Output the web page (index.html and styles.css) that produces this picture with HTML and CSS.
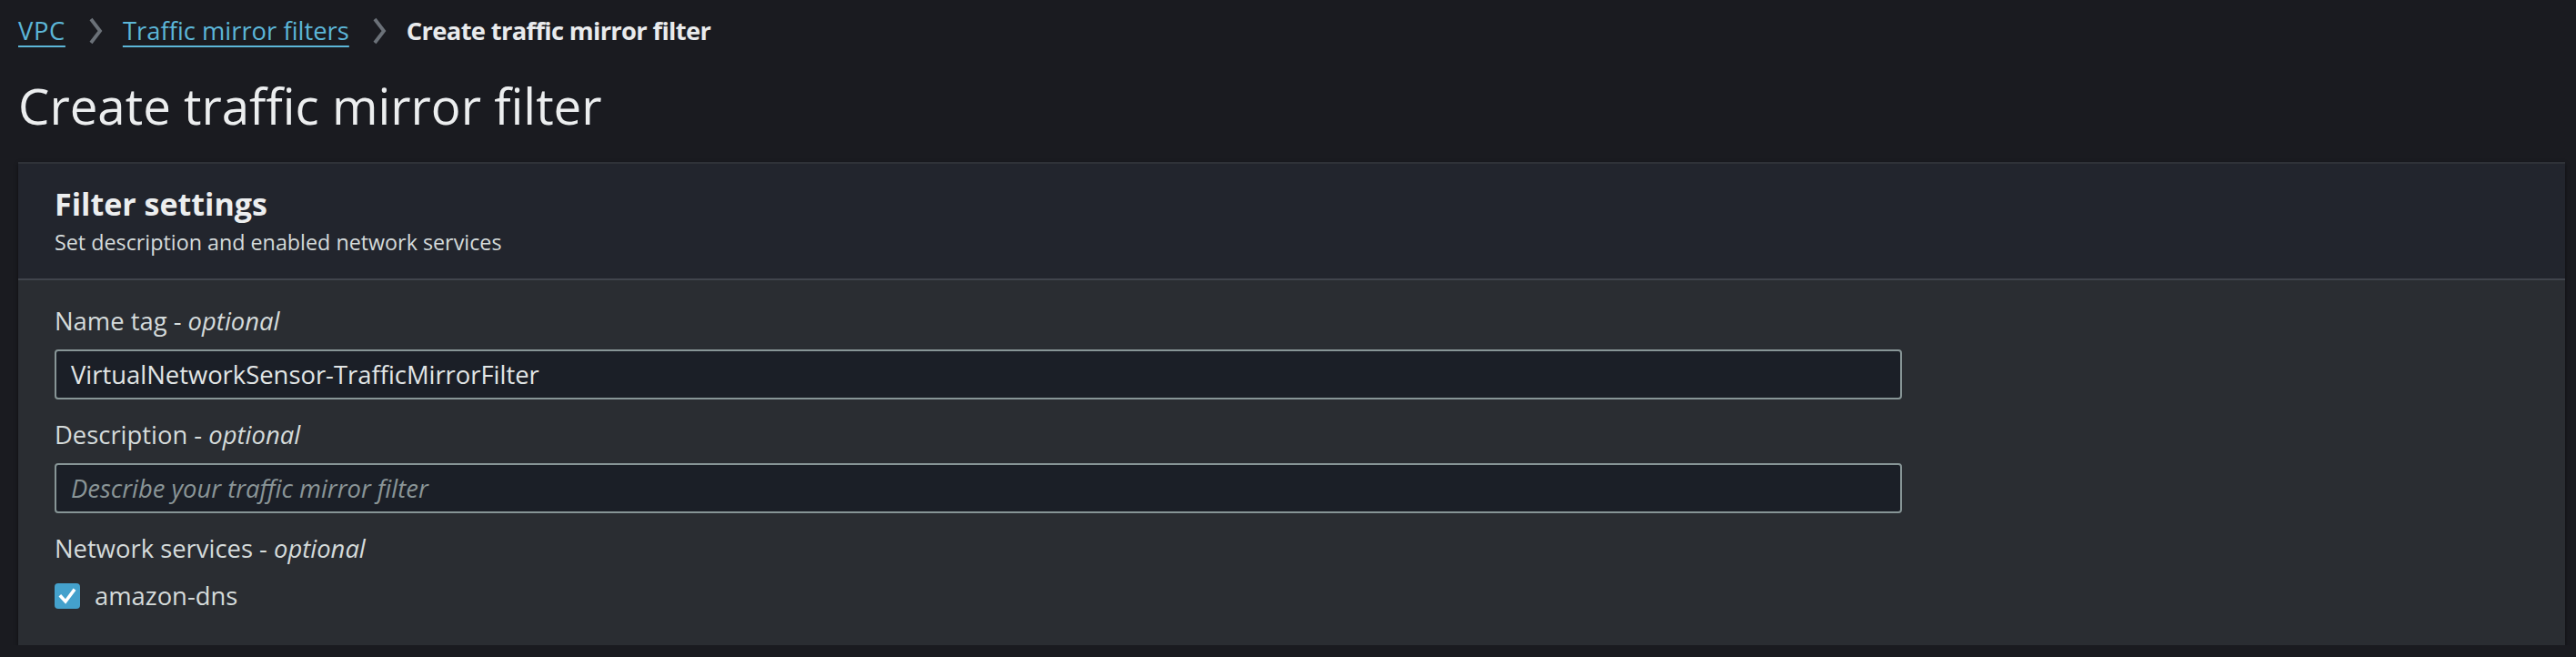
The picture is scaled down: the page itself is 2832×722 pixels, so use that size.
FILE: index.html
```html
<!DOCTYPE html>
<html lang="en">
<head>
<meta charset="utf-8">
<title>Create traffic mirror filter</title>
<link rel="stylesheet" href="styles.css">
</head>
<body>
<nav class="breadcrumbs">
  <a class="crumb-link" href="#">VPC</a>
  <svg class="chevron" viewBox="0 0 16 30" aria-hidden="true"><polyline points="3,2 13,15 3,28"/></svg>
  <a class="crumb-link" href="#">Traffic mirror filters</a>
  <svg class="chevron" viewBox="0 0 16 30" aria-hidden="true"><polyline points="3,2 13,15 3,28"/></svg>
  <span class="crumb-current">Create traffic mirror filter</span>
</nav>
<h1 class="page-title">Create traffic mirror filter</h1>
<section class="panel">
  <header class="panel-header">
    <h2 class="panel-title">Filter settings</h2>
    <p class="panel-desc">Set description and enabled network services</p>
  </header>
  <div class="panel-body">
    <div class="field">
      <label class="field-label">Name tag - <i>optional</i></label>
      <div class="input">VirtualNetworkSensor-TrafficMirrorFilter</div>
    </div>
    <div class="field">
      <label class="field-label">Description - <i>optional</i></label>
      <div class="input placeholder">Describe your traffic mirror filter</div>
    </div>
    <div class="field">
      <label class="field-label">Network services - <i>optional</i></label>
      <div class="check-row">
        <span class="checkbox">
          <svg viewBox="0 0 28 28" aria-hidden="true"><polyline points="7,14.5 12,20 21,8"/></svg>
        </span>
        <span class="check-label">amazon-dns</span>
      </div>
    </div>
  </div>
</section>
</body>
</html>
```
FILE: styles.css
```css
html, body {
  margin: 0;
  padding: 0;
  background: #1a1b20;
}
body {
  font-family: "Open Sans", "Noto Sans", sans-serif;
  font-size: 27.4px;
  color: #d5dbdb;
}
.breadcrumbs {
  display: flex;
  align-items: center;
  padding: 16px 20px 0 20px;
  height: 36px;
  line-height: 36px;
}
.crumb-link {
  color: #5cb6d8;
  text-decoration: underline;
  text-decoration-thickness: 2px;
  text-underline-offset: 6px;
}
.crumb-link:first-child {
  letter-spacing: 0.6px;
}
.chevron {
  width: 16px;
  height: 30px;
  margin: 0 22px 0 25px;
  fill: none;
  stroke: #6b7178;
  stroke-width: 3.8;
}
.crumb-current {
  font-weight: 700;
  color: #e9ebed;
  letter-spacing: -0.7px;
}
.page-title {
  margin: 32px 20px 0 20px;
  font-size: 54.6px;
  line-height: 64px;
  font-weight: 400;
  color: #eceeef;
}
.panel {
  margin: 30px 12px 0 20px;
  border-top: 2px solid #2f3238;
  box-shadow: 0 2px 4px rgba(0, 0, 0, 0.55);
}
.panel-header {
  background: #22252d;
  padding: 22px 40px 25px 40px;
  border-bottom: 2px solid #40444c;
}
.panel-title {
  margin: 0;
  font-size: 34px;
  line-height: 44px;
  font-weight: 700;
  color: #eceeef;
}
.panel-desc {
  margin: 5px 0 0 0;
  font-size: 23.3px;
  line-height: 30px;
  color: #d5dbdb;
}
.panel-body {
  background: #2a2d32;
  padding: 28px 40px 37px 40px;
}
.field {
  margin-bottom: 22px;
}
.field:last-child {
  margin-bottom: 0;
}
.field-label {
  display: block;
  line-height: 34px;
  color: #d5dbdb;
}
.field-label i {
  font-style: italic;
}
.input {
  margin-top: 14px;
  width: 2031px;
  box-sizing: border-box;
  height: 55px;
  line-height: 51px;
  border: 2px solid #879596;
  border-radius: 4px;
  background: #1b1f27;
  padding: 0 16px;
  color: #e2e6e6;
  white-space: nowrap;
}
.input.placeholder {
  font-style: italic;
  color: #8a9597;
}
.check-row {
  display: flex;
  align-items: center;
  gap: 16px;
  margin-top: 18px;
  height: 34px;
  line-height: 34px;
}
.checkbox {
  width: 28px;
  height: 28px;
  border-radius: 4px;
  background: #44a1cc;
  display: flex;
}
.checkbox svg {
  width: 28px;
  height: 28px;
  fill: none;
  stroke: #ffffff;
  stroke-width: 3.5;
  stroke-linecap: square;
}
.check-label {
  color: #d5dbdb;
}
```
